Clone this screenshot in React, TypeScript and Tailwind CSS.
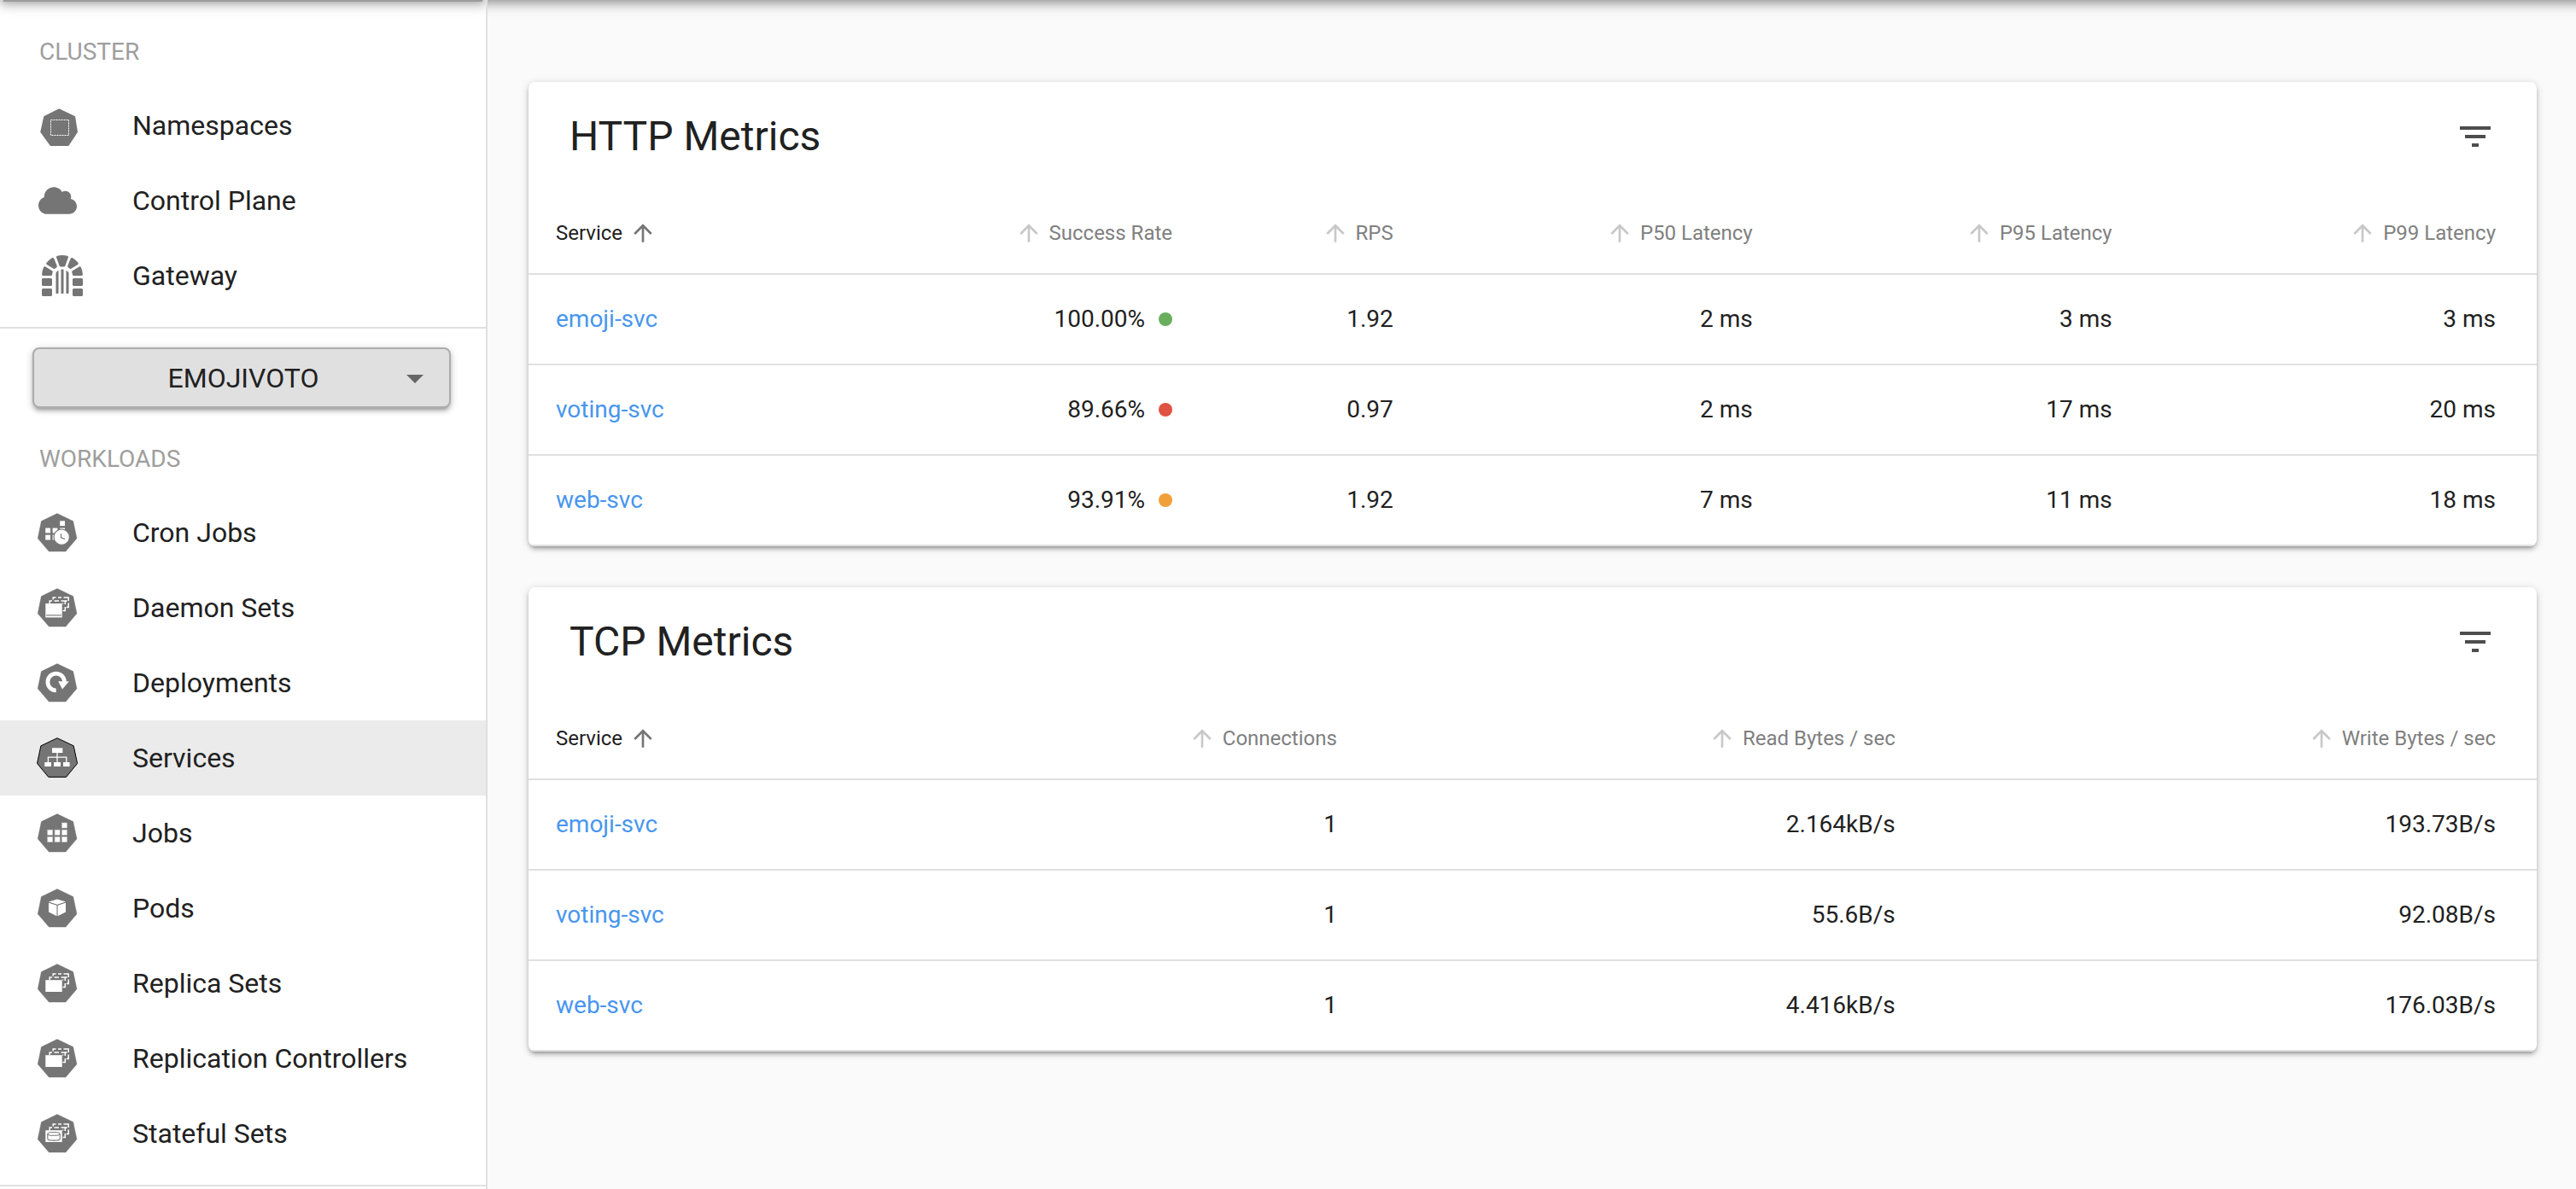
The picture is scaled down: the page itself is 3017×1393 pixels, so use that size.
import type { ReactNode } from "react";
import { FaCloud, FaDungeon } from "react-icons/fa";

const GRAY = "#757575";

function Heptagon({ children, outlined = false }: { children: ReactNode; outlined?: boolean }) {
  return (
    <svg viewBox="0 0 48 48" className="size-12" aria-hidden="true">
      <path
        d={
          outlined
            ? "M24 0.7L43.2 9.8L47.6 30.4L34.5 46.4H13.8L0.5 30.4L4.9 9.8Z"
            : "M24 1.6L42.7 10.6L47 30.7L34 46.1H14.3L1.2 30.7L5.4 10.6Z"
        }
        fill={GRAY}
        stroke={outlined ? "#000" : GRAY}
        strokeWidth={outlined ? 1 : 0.4}
        strokeLinejoin="round"
      />
      {children}
    </svg>
  );
}

function NamespaceIcon() {
  return (
    <svg viewBox="0 0 48 48" className="size-12" aria-hidden="true">
      <path d="M26.2 4.3L45 13.3L48 31.7L37.3 48H16L4.2 31.7L8.3 13.3Z" fill={GRAY} />
      <rect x="16.5" y="17.5" width="21" height="18" fill="none" stroke="#fff" strokeWidth="1" strokeDasharray="2 1" />
    </svg>
  );
}

function StackLayers({ y }: { y: number }) {
  return (
    <g transform={`translate(0 ${y})`} fill="none" stroke="#fff" strokeWidth="1.5">
      <path d="M15.2 19V16H18M20.5 16H26M28.5 16H33.3V20M33.3 23V27.5H30.5" />
      <path d="M19.2 14.5V12H22.5M25 12H29M31.5 12H37.2V16M37.2 18.5V23.5H34.8" />
      <path d="M30.5 18.5V19.5M34.6 15V17" />
    </g>
  );
}

function CronJobIcon() {
  return (
    <Heptagon>
      <g fill="#fff">
        <rect x="27.2" y="10.3" width="5.8" height="5.8" />
        <rect x="10.2" y="18.6" width="5.8" height="5.8" />
        <rect x="18.6" y="18.6" width="5.8" height="5.8" />
        <rect x="27.2" y="18.6" width="5.8" height="5.8" />
        <rect x="10.2" y="26.7" width="5.8" height="5.8" />
        <rect x="18.6" y="26.7" width="5.8" height="5.8" />
      </g>
      <circle cx="29.2" cy="29.2" r="9.2" fill="#fff" stroke={GRAY} strokeWidth="1.2" />
      <path d="M28.5 25.2V29.8L33 31.8" fill="none" stroke={GRAY} strokeWidth="1.2" />
    </Heptagon>
  );
}

function DaemonSetIcon() {
  return (
    <Heptagon>
      <StackLayers y={0} />
      <rect x="10.3" y="19" width="19.4" height="13.3" fill="#fff" />
      <rect x="10.3" y="33.4" width="19.4" height="2" fill="#fff" />
      <path d="M10.6 32V34M29.4 32V34" stroke="#fff" strokeWidth="0.7" />
    </Heptagon>
  );
}

function DeploymentIcon() {
  return (
    <Heptagon>
      <path d="M22.7 32.8A9.8 9.8 0 1 1 32.5 23" fill="none" stroke="#fff" strokeWidth="4.8" />
      <path d="M25.2 22.3H37.8L30 31.5Z" fill="#fff" />
    </Heptagon>
  );
}

function ServiceIcon() {
  return (
    <Heptagon outlined>
      <g fill="#fff">
        <rect x="18" y="12.3" width="12.3" height="5.7" />
        <rect x="9.3" y="29" width="7.6" height="5" />
        <rect x="20" y="29" width="8" height="5" />
        <rect x="31" y="29" width="7.6" height="5" />
      </g>
      <path d="M24 18V29M13.4 29V23.2H34.8V29" fill="none" stroke="#fff" strokeWidth="1.3" />
    </Heptagon>
  );
}

function JobIcon() {
  return (
    <Heptagon>
      <g fill="#fff" stroke="#c4c4c4" strokeWidth="0.6">
        <rect x="29.5" y="12" width="6" height="6" />
        <rect x="12.7" y="20.2" width="6" height="6" />
        <rect x="21.1" y="20.2" width="6" height="6" />
        <rect x="29.5" y="20.2" width="6" height="6" />
        <rect x="12.7" y="28.4" width="6" height="6" />
        <rect x="21.1" y="28.4" width="6" height="6" />
        <rect x="29.5" y="28.4" width="6" height="6" />
      </g>
    </Heptagon>
  );
}

function PodIcon() {
  return (
    <Heptagon>
      <g fill="#fff">
        <path d="M24 13.5L34 16.6L24 19.7L14 16.6Z" />
        <path d="M14 17.8L23.5 20.7V33.3L14 28.6Z" />
        <path d="M34 17.8L24.6 20.7V33.3L34 28.6Z" />
      </g>
    </Heptagon>
  );
}

function ReplicaIcon() {
  return (
    <Heptagon>
      <StackLayers y={1} />
      <rect x="10.3" y="20.2" width="19.4" height="13.8" fill="#fff" />
    </Heptagon>
  );
}

function StatefulSetIcon() {
  return (
    <Heptagon>
      <StackLayers y={1} />
      <rect x="10.3" y="20.2" width="19.4" height="13.8" fill="#fff" />
      <g fill="none" stroke={GRAY} strokeWidth="1.1">
        <ellipse cx="20" cy="24.4" rx="7.2" ry="1.9" />
        <path d="M12.8 24.4V30.2C12.8 32.8 27.2 32.8 27.2 30.2V24.4" />
      </g>
    </Heptagon>
  );
}

type NavEntry = { label: string; icon: ReactNode; active?: boolean };

const clusterItems: NavEntry[] = [
  { label: "Namespaces", icon: <NamespaceIcon /> },
  { label: "Control Plane", icon: <FaCloud className="ml-0.5 h-9 w-[45px] text-[#757575]" aria-hidden="true" /> },
  { label: "Gateway", icon: <FaDungeon className="ml-1.5 size-12 text-[#757575]" aria-hidden="true" /> },
];

const workloadItems: NavEntry[] = [
  { label: "Cron Jobs", icon: <CronJobIcon /> },
  { label: "Daemon Sets", icon: <DaemonSetIcon /> },
  { label: "Deployments", icon: <DeploymentIcon /> },
  { label: "Services", icon: <ServiceIcon />, active: true },
  { label: "Jobs", icon: <JobIcon /> },
  { label: "Pods", icon: <PodIcon /> },
  { label: "Replica Sets", icon: <ReplicaIcon /> },
  { label: "Replication Controllers", icon: <ReplicaIcon /> },
  { label: "Stateful Sets", icon: <StatefulSetIcon /> },
];

function NavSection({ title, items }: { title: string; items: NavEntry[] }) {
  return (
    <section className="border-b-2 border-[#e0e0e0] py-4">
      <h2 className="flex h-[86px] items-center pt-0.5 pl-[46px] text-[28px] leading-8 text-[#9e9e9e]">{title}</h2>
      <ul>
        {items.map((item) => (
          <li key={item.label}>
            <a
              href="#"
              aria-current={item.active ? "page" : undefined}
              className={
                item.active
                  ? "flex h-[88px] items-center bg-[#ebebeb] pl-[43px]"
                  : "flex h-[88px] items-center pl-[43px]"
              }
            >
              <span className="w-28 shrink-0">{item.icon}</span>
              <span className="text-[32px] leading-12 whitespace-nowrap">{item.label}</span>
            </a>
          </li>
        ))}
      </ul>
    </section>
  );
}

function NamespaceSelect() {
  return (
    <div className="relative mt-[22px] mr-[41px] ml-[38px]">
      <select
        aria-label="Namespace"
        className="block h-[71px] w-full appearance-none rounded-lg border-2 border-[#acacac] bg-[#e0e0e0] pl-1 text-center text-[32px] [text-align-last:center] shadow-[0_2px_10px_rgba(0,0,0,0.2),0_4px_4px_rgba(0,0,0,0.14),0_6px_2px_-4px_rgba(0,0,0,0.12)]"
      >
        <option>EMOJIVOTO</option>
      </select>
      <svg
        viewBox="0 0 24 24"
        className="pointer-events-none absolute top-3 right-[18px] size-12 fill-[#666666]"
        aria-hidden="true"
      >
        <path d="M7 10l5 5 5-5z" />
      </svg>
    </div>
  );
}

function SortArrow({ active = false }: { active?: boolean }) {
  return (
    <svg
      viewBox="0 0 24 24"
      className={active ? "size-8 shrink-0 fill-[#757575]" : "size-8 shrink-0 fill-[#c8c8c8]"}
      aria-hidden="true"
    >
      <path d="M4 12l1.41 1.41L11 7.83V20h2V7.83l5.58 5.59L20 12l-8-8-8 8z" />
    </svg>
  );
}

type Column = { label: string; width: string };
type Row = { name: string; cells: ReactNode[] };

function MetricsCard({ title, columns, rows }: { title: string; columns: Column[]; rows: Row[] }) {
  return (
    <section className="overflow-hidden rounded-lg bg-white shadow-[0_2px_10px_rgba(0,0,0,0.2),0_4px_4px_rgba(0,0,0,0.14),0_6px_2px_-4px_rgba(0,0,0,0.12)]">
      <div className="flex h-32 items-center justify-between px-12">
        <h2 className="text-5xl">{title}</h2>
        <button type="button" aria-label={`Filter ${title}`}>
          <svg viewBox="0 0 24 24" className="size-12 fill-[#4d4d4d]" aria-hidden="true">
            <path d="M10 18h4v-2h-4v2zM3 6v2h18V6H3zm3 7h12v-2H6v2z" />
          </svg>
        </button>
      </div>
      <table className="w-full table-fixed border-separate border-spacing-0">
        <thead>
          <tr className="text-2xl">
            {columns.map((column, index) => (
              <th
                key={column.label}
                scope="col"
                aria-sort={index === 0 ? "ascending" : "none"}
                className={`${column.width} ${index === 0 ? "pl-8 text-left" : "pr-12 text-right"} h-[98px] border-b-2 border-[#e0e0e0] font-normal`}
              >
                <button
                  type="button"
                  className={
                    index === 0
                      ? "inline-flex items-center gap-2 align-middle"
                      : "inline-flex flex-row-reverse items-center gap-2 align-middle text-[#808080]"
                  }
                >
                  <span>{column.label}</span>
                  <SortArrow active={index === 0} />
                </button>
              </th>
            ))}
          </tr>
        </thead>
        <tbody>
          {rows.map((row) => (
            <tr key={row.name} className="text-[28px] leading-10">
              <td className="h-[106px] border-b-2 border-[#e0e0e0] pl-8">
                <a href="#" className="text-[#4896ee]">
                  {row.name}
                </a>
              </td>
              {row.cells.map((cell, index) => (
                <td key={index} className="h-[106px] border-b-2 border-[#e0e0e0] pr-12 text-right">
                  {cell}
                </td>
              ))}
            </tr>
          ))}
        </tbody>
      </table>
    </section>
  );
}

function SuccessRate({ value, dot }: { value: string; dot: string }) {
  return (
    <span className="flex items-center justify-end gap-4">
      {value}
      <span className={`size-4 rounded-full ${dot}`} />
    </span>
  );
}

const httpColumns: Column[] = [
  { label: "Service", width: "w-[16%]" },
  { label: "Success Rate", width: "w-[18.1%]" },
  { label: "RPS", width: "w-[11%]" },
  { label: "P50 Latency", width: "w-[17.9%]" },
  { label: "P95 Latency", width: "w-[17.9%]" },
  { label: "P99 Latency", width: "w-[19.1%]" },
];

const httpRows: Row[] = [
  { name: "emoji-svc", cells: [<SuccessRate value="100.00%" dot="bg-[#69ae5d]" />, "1.92", "2 ms", "3 ms", "3 ms"] },
  { name: "voting-svc", cells: [<SuccessRate value="89.66%" dot="bg-[#e05241]" />, "0.97", "2 ms", "17 ms", "20 ms"] },
  { name: "web-svc", cells: [<SuccessRate value="93.91%" dot="bg-[#f19f39]" />, "1.92", "7 ms", "11 ms", "18 ms"] },
];

const tcpColumns: Column[] = [
  { label: "Service", width: "w-[20.3%]" },
  { label: "Connections", width: "w-[22%]" },
  { label: "Read Bytes / sec", width: "w-[27.8%]" },
  { label: "Write Bytes / sec", width: "w-[29.9%]" },
];

const tcpRows: Row[] = [
  { name: "emoji-svc", cells: ["1", "2.164kB/s", "193.73B/s"] },
  { name: "voting-svc", cells: ["1", "55.6B/s", "92.08B/s"] },
  { name: "web-svc", cells: ["1", "4.416kB/s", "176.03B/s"] },
];

export default function App() {
  return (
    <div className="flex min-h-screen bg-[#fafafa] font-[Roboto,sans-serif] text-[#212121]">
      <nav
        aria-label="Main"
        className="relative w-[571px] shrink-0 overflow-hidden border-r-2 border-[#e0e0e0] bg-white pt-px"
      >
        {/* Shadow cast by the app bar above the viewport */}
        <div className="pointer-events-none absolute inset-x-0 -top-32 h-32 shadow-[0_4px_8px_-2px_rgba(0,0,0,0.2),0_8px_10px_rgba(0,0,0,0.14),0_2px_20px_rgba(0,0,0,0.12)]" />
        <div className="pointer-events-none absolute top-0 right-1 left-1 h-0.5 bg-[#9c9c9c]" />
        <NavSection title="CLUSTER" items={clusterItems} />
        <NamespaceSelect />
        <NavSection title="WORKLOADS" items={workloadItems} />
      </nav>
      <main className="relative flex min-w-0 flex-1 flex-col gap-12 overflow-hidden py-24 pr-[46px] pl-12">
        <div className="pointer-events-none absolute -inset-x-8 -top-32 h-32 shadow-[0_4px_8px_-2px_rgba(0,0,0,0.2),0_8px_10px_rgba(0,0,0,0.14),0_2px_20px_rgba(0,0,0,0.12)]" />
        <MetricsCard title="HTTP Metrics" columns={httpColumns} rows={httpRows} />
        <MetricsCard title="TCP Metrics" columns={tcpColumns} rows={tcpRows} />
      </main>
    </div>
  );
}
